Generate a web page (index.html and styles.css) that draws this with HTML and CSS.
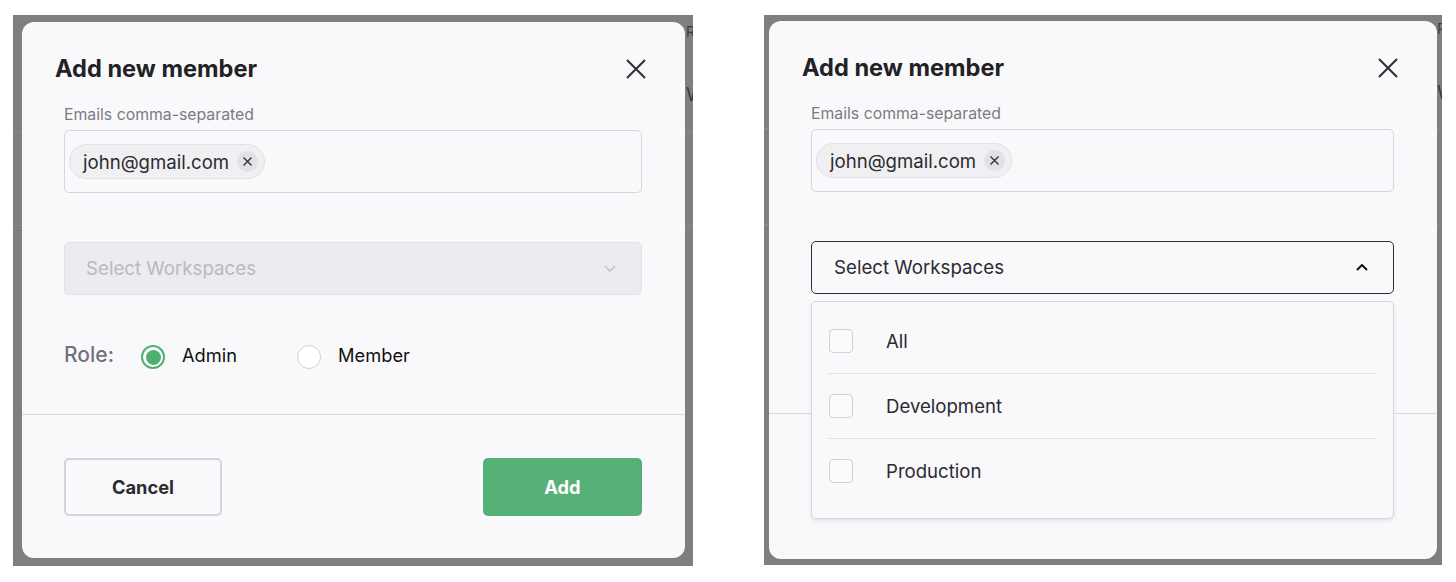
FILE: index.html
```html
<!DOCTYPE html>
<html lang="en">
<head>
  <meta charset="UTF-8">
  <title>Add new member</title>
  <link rel="stylesheet" href="styles.css">
</head>
<body>
  <div class="shots">
    <!-- closed state -->
    <section class="shot shot-left">
      <div class="backdrop">
        <div class="ghost-line l1"></div>
        <div class="ghost-line l2"></div>
        <span class="ghost-txt t1">R</span>
        <span class="ghost-txt t2">W</span>
      </div>
      <div class="modal">
        <div class="modal-head">
          <h2>Add new member</h2>
          <button class="close">
            <svg width="20" height="20" viewBox="0 0 20 20"><path d="M1 1L19 19M19 1L1 19" stroke="#2f2f33" stroke-width="2" fill="none"/></svg>
          </button>
        </div>
        <div class="modal-body">
          <label class="field-label">Emails comma-separated</label>
          <div class="tag-input">
            <span class="chip">john@gmail.com
              <span class="chip-x"><svg width="9" height="9" viewBox="0 0 9 9"><path d="M0.5 0.5L8.5 8.5M8.5 0.5L0.5 8.5" stroke="#333" stroke-width="1.4" fill="none"/></svg></span>
            </span>
          </div>
          <div class="select-wrap">
            <div class="select is-disabled">
              <span>Select Workspaces</span>
              <svg width="12" height="7" viewBox="0 0 12 7"><path d="M1 1L6 6L11 1" stroke="#c3c3ca" stroke-width="1.5" fill="none"/></svg>
            </div>
          </div>
          <div class="role-row">
            <span class="role-label">Role:</span>
            <label class="radio-opt first"><span class="radio checked"></span><span class="opt-text">Admin</span></label>
            <label class="radio-opt"><span class="radio"></span><span class="opt-text">Member</span></label>
          </div>
        </div>
        <div class="modal-foot">
          <button class="btn btn-cancel">Cancel</button>
          <button class="btn btn-add">Add</button>
        </div>
      </div>
    </section>

    <!-- open dropdown state -->
    <section class="shot shot-right">
      <div class="backdrop">
        <div class="ghost-line l1"></div>
        <div class="ghost-line l2"></div>
        <span class="ghost-txt t1">R</span>
        <span class="ghost-txt t2">W</span>
      </div>
      <div class="modal">
        <div class="modal-head">
          <h2>Add new member</h2>
          <button class="close">
            <svg width="20" height="20" viewBox="0 0 20 20"><path d="M1 1L19 19M19 1L1 19" stroke="#2f2f33" stroke-width="2" fill="none"/></svg>
          </button>
        </div>
        <div class="modal-body">
          <label class="field-label">Emails comma-separated</label>
          <div class="tag-input">
            <span class="chip">john@gmail.com
              <span class="chip-x"><svg width="9" height="9" viewBox="0 0 9 9"><path d="M0.5 0.5L8.5 8.5M8.5 0.5L0.5 8.5" stroke="#333" stroke-width="1.4" fill="none"/></svg></span>
            </span>
          </div>
          <div class="select-wrap">
            <div class="select is-open">
              <span>Select Workspaces</span>
              <svg width="12" height="7" viewBox="0 0 12 7"><path d="M1 6L6 1L11 6" stroke="#111" stroke-width="2" fill="none"/></svg>
            </div>
            <div class="menu">
              <div class="menu-item"><span class="check"></span>All</div>
              <div class="menu-item"><span class="check"></span>Development</div>
              <div class="menu-item"><span class="check"></span>Production</div>
            </div>
          </div>
          <div class="role-row">
            <span class="role-label">Role:</span>
            <label class="radio-opt first"><span class="radio checked"></span><span class="opt-text">Admin</span></label>
            <label class="radio-opt"><span class="radio"></span><span class="opt-text">Member</span></label>
          </div>
        </div>
        <div class="modal-foot under-menu">
          <button class="btn btn-cancel">Cancel</button>
          <button class="btn btn-add">Add</button>
        </div>
      </div>
    </section>
  </div>
</body>
</html>
```

FILE: styles.css
```css
body {
  margin: 0;
  background: #fff;
  font-family: Inter, 'Noto Sans', sans-serif;
}
.shots {
  display: flex;
  gap: 71px;
  padding: 15px 0 0 13px;
}
.shot {
  position: relative;
  overflow: hidden;
  background: #7f7f7f;
  display: flex;
  flex-direction: column;
  box-sizing: border-box;
}
.shot-left {
  width: 680px;
  height: 551px;
  padding: 7px 8px 8px 9px;
}
.shot-right {
  width: 678px;
  height: 550px;
  padding: 6px 5px 6px 5px;
}

/* page peeking out behind the overlay */
.backdrop {
  position: absolute;
  inset: 0;
}
.ghost-line {
  position: absolute;
  left: 0;
  right: 0;
  height: 1px;
  background: #8b8b8b;
}
.ghost-line.l1 { top: 116px; }
.ghost-line.l2 { top: 210px; }
.shot-right .ghost-line.l1 { top: 113px; }
.shot-right .ghost-line.l2 { top: 209px; }
.ghost-txt {
  position: absolute;
  left: 673px;
  color: #3a3a3a;
}
.ghost-txt.t1 { top: 8px; font-size: 14px; }
.ghost-txt.t2 { top: 68px; font-size: 19px; }
.shot-right .ghost-txt.t1 { top: 5px; }
.shot-right .ghost-txt.t2 { top: 66px; }

.modal {
  position: relative;
  flex: 1;
  display: flex;
  flex-direction: column;
  background: #f9f9fb;
  border-radius: 12px;
}
.modal-head {
  display: flex;
  justify-content: space-between;
  align-items: center;
  padding: 33px 39px 0 33px;
}
.modal-head h2 {
  margin: 0;
  font-size: 23.6px;
  line-height: 28px;
  font-weight: 700;
  color: #222226;
}
.close {
  width: 20px;
  height: 20px;
  padding: 0;
  border: none;
  background: none;
  display: flex;
}
.modal-body {
  padding: 0 43px 45px 42px;
  border-bottom: 1px solid #d9d9de;
}
.field-label {
  display: block;
  margin-top: 22px;
  font-size: 15.8px;
  line-height: 20px;
  color: #7b7b86;
}
.tag-input {
  margin-top: 5px;
  height: 63px;
  box-sizing: border-box;
  border: 1px solid #d6d6dc;
  border-radius: 5px;
  padding: 13px 4px;
  display: flex;
  align-items: center;
}
.chip {
  display: inline-flex;
  align-items: center;
  gap: 8px;
  height: 35px;
  box-sizing: border-box;
  border: 1px solid #e1e1e6;
  border-radius: 18px;
  background: #f0f0f3;
  padding: 0 6px 0 13px;
  font-size: 18.6px;
  color: #2b2b30;
}
.chip-x {
  width: 21px;
  height: 21px;
  border-radius: 50%;
  background: #e1e1e6;
  display: flex;
  align-items: center;
  justify-content: center;
}
.select-wrap {
  position: relative;
  margin-top: 49px;
}
.select {
  height: 53px;
  box-sizing: border-box;
  border: 1px solid #e1e1e6;
  border-radius: 5px;
  display: flex;
  align-items: center;
  justify-content: space-between;
  padding: 0 25px 0 21px;
  font-size: 18.7px;
}
.select.is-disabled {
  background: #ebebf0;
  color: #b9b9c2;
}
.select.is-open {
  border: 1px solid #2f2f33;
  color: #2b2b30;
  padding-left: 22px;
}
.menu {
  position: absolute;
  top: calc(100% + 7px);
  left: 0;
  right: 0;
  z-index: 2;
  background: #f9f9fb;
  border: 1px solid #d6d6dc;
  border-radius: 5px;
  box-shadow: 0 2px 4px rgba(0,0,0,0.08);
  padding: 7px 16px 15px;
}
.menu-item {
  display: flex;
  align-items: center;
  height: 64px;
  border-bottom: 1px solid #e0e0e5;
  font-size: 18.6px;
  color: #2b2b30;
}
.menu-item:last-child {
  border-bottom: none;
}
.check {
  width: 24px;
  height: 24px;
  box-sizing: border-box;
  border: 1px solid #d0d0d6;
  border-radius: 4px;
  background: #fbfbfc;
  margin-left: 1px;
  margin-right: 33px;
}
.role-row {
  margin-top: 50px;
  display: flex;
  align-items: center;
  height: 24px;
}
.role-label {
  width: 77px;
  font-size: 21px;
  font-weight: 500;
  color: #72727f;
  padding-bottom: 5px;
}
.radio-opt {
  display: flex;
  align-items: center;
  gap: 17px;
  font-size: 18.3px;
  color: #111;
}
.opt-text {
  padding-bottom: 5px;
}
.radio-opt.first {
  width: 156px;
}
.radio {
  width: 24px;
  height: 24px;
  box-sizing: border-box;
  border-radius: 50%;
  border: 1px solid #cfcfd6;
  background: #fff;
}
.radio.checked {
  border: 2px solid #4fae70;
  display: flex;
  align-items: center;
  justify-content: center;
}
.radio.checked::after {
  content: '';
  width: 15px;
  height: 15px;
  border-radius: 50%;
  background: #4fae70;
}
.modal-foot {
  display: flex;
  justify-content: space-between;
  padding: 43px 43px 0 42px;
}
.modal-foot.under-menu .btn {
  visibility: hidden;
}
.btn {
  width: 158px;
  height: 58px;
  border-radius: 5px;
  font-family: inherit;
  font-size: 18.3px;
  font-weight: 700;
  cursor: pointer;
}
.btn-cancel {
  background: transparent;
  border: 2px solid #d3d3d9;
  color: #2b2b30;
}
.btn-add {
  width: 159px;
  background: #55b175;
  border: none;
  color: #fff;
}
```
